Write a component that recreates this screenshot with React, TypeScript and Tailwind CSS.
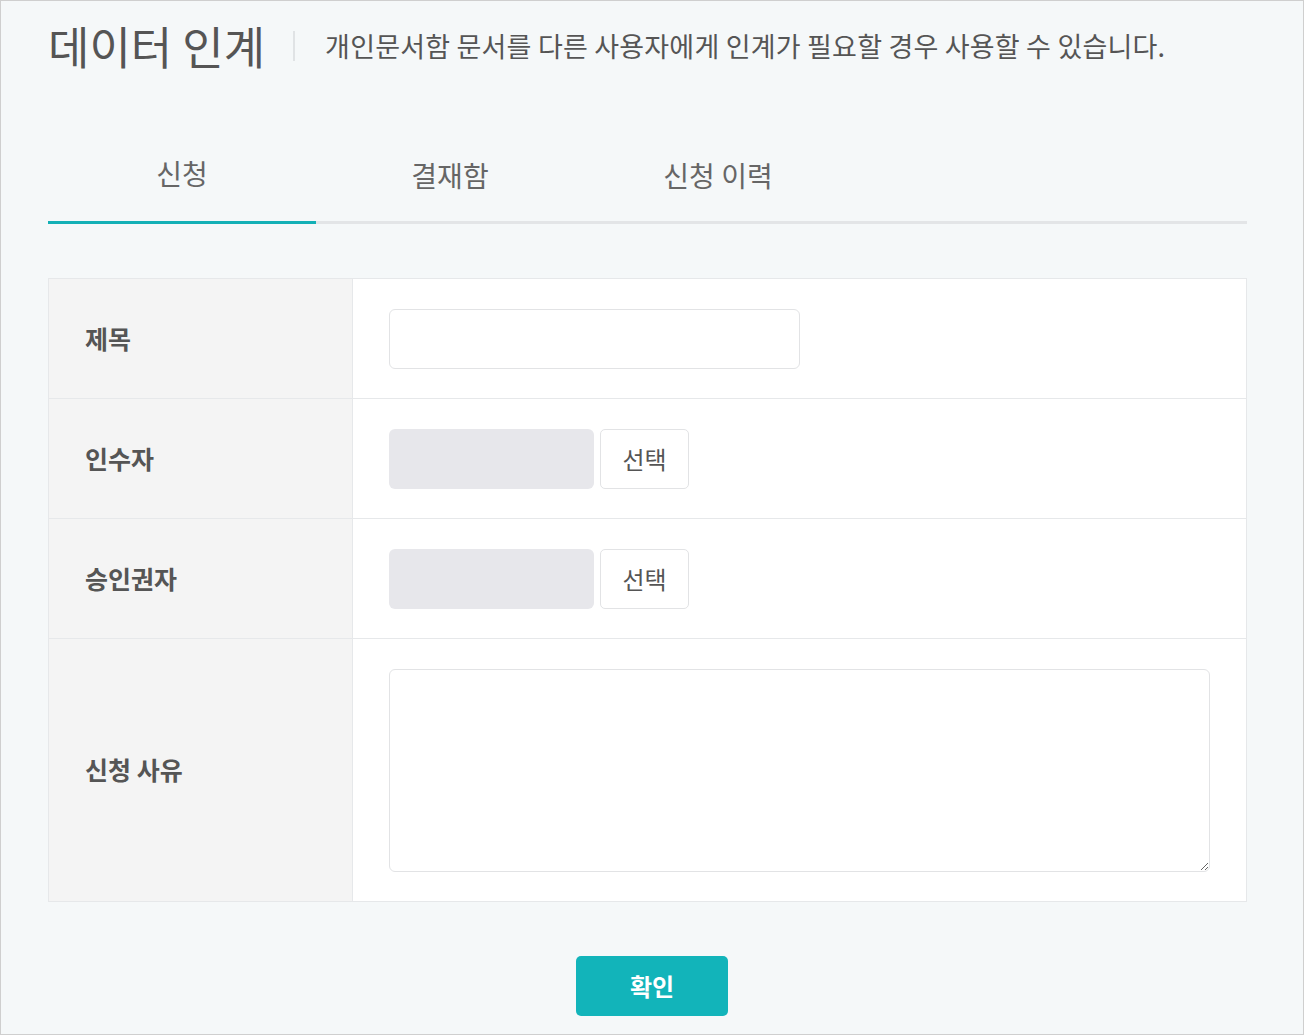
import { useState } from 'react';

const TABS = ['신청', '결재함', '신청 이력'];

function Row({ label, tall, children }: { label: string; tall?: boolean; children: React.ReactNode }) {
  return (
    <div className={`flex border-b border-[#e6e8ea] last:border-b-0 ${tall ? 'h-[262px]' : 'h-[120px]'}`}>
      <div className="flex w-[304px] shrink-0 items-center border-r border-[#e6e8ea] bg-[#f4f4f4] pl-[36px] text-[25px] font-bold text-[#555]">
        {label}
      </div>
      <div className="flex flex-1 items-center bg-white pl-[36px]">{children}</div>
    </div>
  );
}

export default function App() {
  const [tab, setTab] = useState(0);

  return (
    <div
      className="h-[1035px] w-[1304px] border border-[#cfcfcf] bg-[#f5f8f9] pl-[47px] pr-[56px]"
      style={{ fontFamily: '"Noto Sans CJK KR", "Noto Sans", sans-serif' }}
    >
      {/* 헤더 */}
      <div className="flex h-[90px] items-center">
        <h1 className="text-[45px] font-normal text-[#555]">데이터 인계</h1>
        <div className="ml-[28px] mr-[30px] h-[30px] w-[2px] bg-[#e0e3e5]" />
        <p className="text-[27px] tracking-[0.2px] text-[#555]">개인문서함 문서를 다른 사용자에게 인계가 필요할 경우 사용할 수 있습니다.</p>
      </div>

      {/* 탭 */}
      <div className="mt-[42px] flex border-b-[3px] border-[#e3e5e7]">
        {TABS.map((t, i) => (
          <button
            key={t}
            onClick={() => setTab(i)}
            className={`-mb-[3px] h-[91px] w-[268px] pb-[8px] text-[28px] text-[#666] ${
              tab === i ? 'border-b-[3px] border-[#13b0b6]' : ''
            }`}
          >
            {t}
          </button>
        ))}
      </div>

      {/* 폼 */}
      <div className="mt-[54px] border border-[#e6e8ea] bg-white">
        <Row label="제목">
          <input className="h-[60px] w-[411px] rounded-[6px] border border-[#e2e3e5] bg-white px-3 outline-none" />
        </Row>
        <Row label="인수자">
          <div className="h-[60px] w-[205px] rounded-[6px] bg-[#e7e7eb]" />
          <button className="ml-[6px] h-[60px] w-[89px] rounded-[5px] border border-[#e2e3e5] bg-white text-[24px] text-[#555]">
            선택
          </button>
        </Row>
        <Row label="승인권자">
          <div className="h-[60px] w-[205px] rounded-[6px] bg-[#e7e7eb]" />
          <button className="ml-[6px] h-[60px] w-[89px] rounded-[5px] border border-[#e2e3e5] bg-white text-[24px] text-[#555]">
            선택
          </button>
        </Row>
        <Row label="신청 사유" tall>
          <textarea className="h-[203px] w-[821px] rounded-[6px] border border-[#e2e3e5] bg-white p-3 outline-none" />
        </Row>
      </div>

      {/* 확인 */}
      <div className="mt-[54px] flex justify-center pl-[9px]">
        <button className="h-[60px] w-[152px] rounded-[5px] bg-[#12b4ba] text-[24px] font-bold text-white">확인</button>
      </div>
    </div>
  );
}
